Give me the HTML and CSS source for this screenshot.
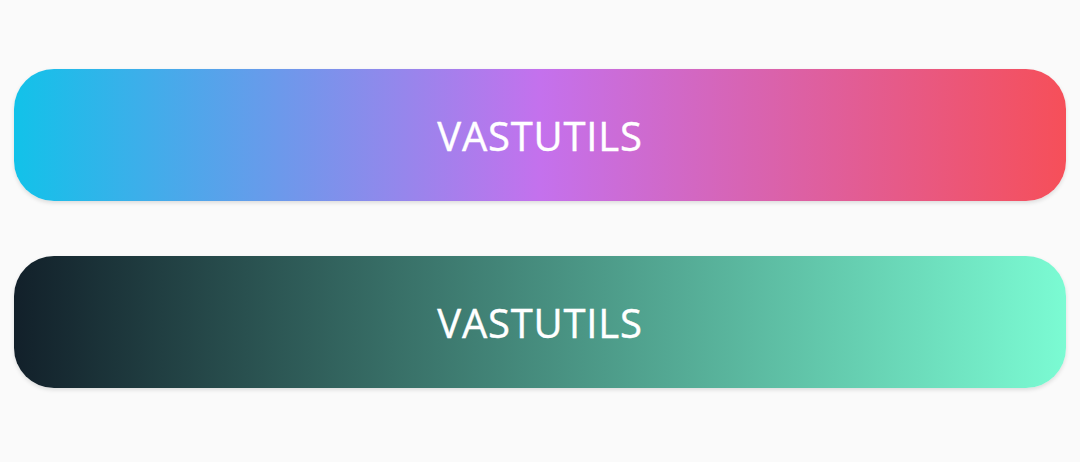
FILE: index.html
```html
<!DOCTYPE html>
<html>
<head>
<meta charset="utf-8">
<link rel="stylesheet" href="styles.css">
</head>
<body>
<div class="page">
  <button class="btn btn-shine">VASTUTILS</button>
  <button class="btn btn-mint">VASTUTILS</button>
</div>
</body>
</html>
```
FILE: styles.css
```css
html, body {
  margin: 0;
  padding: 0;
  background: #fafafa;
  width: 1080px;
  height: 462px;
  overflow: hidden;
}
.page {
  display: flex;
  flex-direction: column;
  gap: 55px;
  padding: 69px 14px 0 14px;
}
.btn {
  display: flex;
  align-items: center;
  justify-content: center;
  height: 132px;
  width: 100%;
  border: none;
  border-radius: 40px;
  color: #ffffff;
  font-family: "Open Sans", "Noto Sans", sans-serif;
  font-size: 40px;
  font-weight: 500;
  letter-spacing: 0.8px;
  -webkit-text-stroke: 0.4px #ffffff;
  box-shadow: 0 2px 4px rgba(0,0,0,0.12);
  padding: 0;
}
.btn-shine {
  background: linear-gradient(to right, #12c2e9, #c471ed, #f64f59);
}
.btn-mint {
  background: linear-gradient(to right, #12202a, #7bfbd3);
}
```
